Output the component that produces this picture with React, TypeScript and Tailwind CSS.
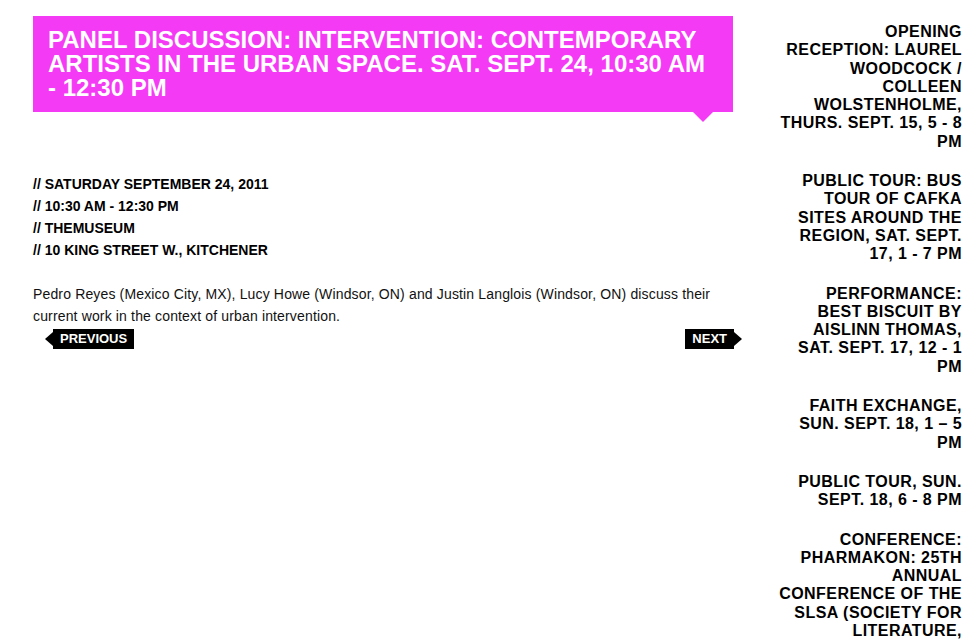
const details = [
  "// SATURDAY SEPTEMBER 24, 2011",
  "// 10:30 AM - 12:30 PM",
  "// THEMUSEUM",
  "// 10 KING STREET W., KITCHENER",
];

const events = [
  "OPENING RECEPTION: LAUREL WOODCOCK / COLLEEN WOLSTENHOLME, THURS. SEPT. 15, 5 - 8 PM",
  "PUBLIC TOUR: BUS TOUR OF CAFKA SITES AROUND THE REGION, SAT. SEPT. 17, 1 - 7 PM",
  "PERFORMANCE: BEST BISCUIT BY AISLINN THOMAS, SAT. SEPT. 17, 12 - 1 PM",
  "FAITH EXCHANGE, SUN. SEPT. 18, 1 – 5 PM",
  "PUBLIC TOUR, SUN. SEPT. 18, 6 - 8 PM",
  "CONFERENCE: PHARMAKON: 25TH ANNUAL CONFERENCE OF THE SLSA (SOCIETY FOR LITERATURE, SCIENCE AND THE ARTS), SEPT. 29 – OCT. 2",
];

function NavTag({ label, dir }: { label: string; dir: "prev" | "next" }) {
  return (
    <a href="#" className="flex items-center">
      {dir === "prev" && (
        <span className="h-0 w-0 border-y-[7px] border-r-[8px] border-y-transparent border-r-black" />
      )}
      <span className="flex h-[20px] items-center bg-black px-[7px] text-[13px] font-bold text-white">
        {label}
      </span>
      {dir === "next" && (
        <span className="h-0 w-0 border-y-[7px] border-l-[8px] border-y-transparent border-l-black" />
      )}
    </a>
  );
}

export default function App() {
  return (
    <div className="flex min-h-[640px] bg-white font-['Liberation_Sans',Arial,sans-serif] text-black">
      <main className="ml-[33px] mt-[16px] w-[700px] shrink-0">
        <div className="relative bg-[#f53af5] px-[15px] py-3">
          <h1 className="text-[24px] font-bold leading-[24px] text-white">
            PANEL DISCUSSION: INTERVENTION: CONTEMPORARY ARTISTS IN THE URBAN SPACE. SAT. SEPT. 24, 10:30 AM - 12:30 PM
          </h1>
          <span className="absolute right-[20px] top-full h-0 w-0 border-x-[10px] border-t-[10px] border-x-transparent border-t-[#f53af5]" />
        </div>

        <ul className="mt-[61px] text-[14px] font-bold leading-[22px]">
          {details.map((d) => (
            <li key={d}>{d}</li>
          ))}
        </ul>

        <p className="mt-[22px] text-[14px] leading-[22px] tracking-[0.15px] text-[#111]">
          Pedro Reyes (Mexico City, MX), Lucy Howe (Windsor, ON) and Justin Langlois (Windsor, ON) discuss their current work in the context of urban intervention.
        </p>

        <nav className="-mr-[9px] mt-[2px] flex justify-between pl-3">
          <NavTag label="PREVIOUS" dir="prev" />
          <NavTag label="NEXT" dir="next" />
        </nav>
      </main>

      <aside className="ml-auto mr-[18px] mt-[23px] w-[184px] shrink-0 text-right text-[16px] font-bold leading-[18.3px] tracking-[0.45px]">
        {events.map((e) => (
          <p key={e} className="mb-[21px]">
            {e}
          </p>
        ))}
      </aside>
    </div>
  );
}
